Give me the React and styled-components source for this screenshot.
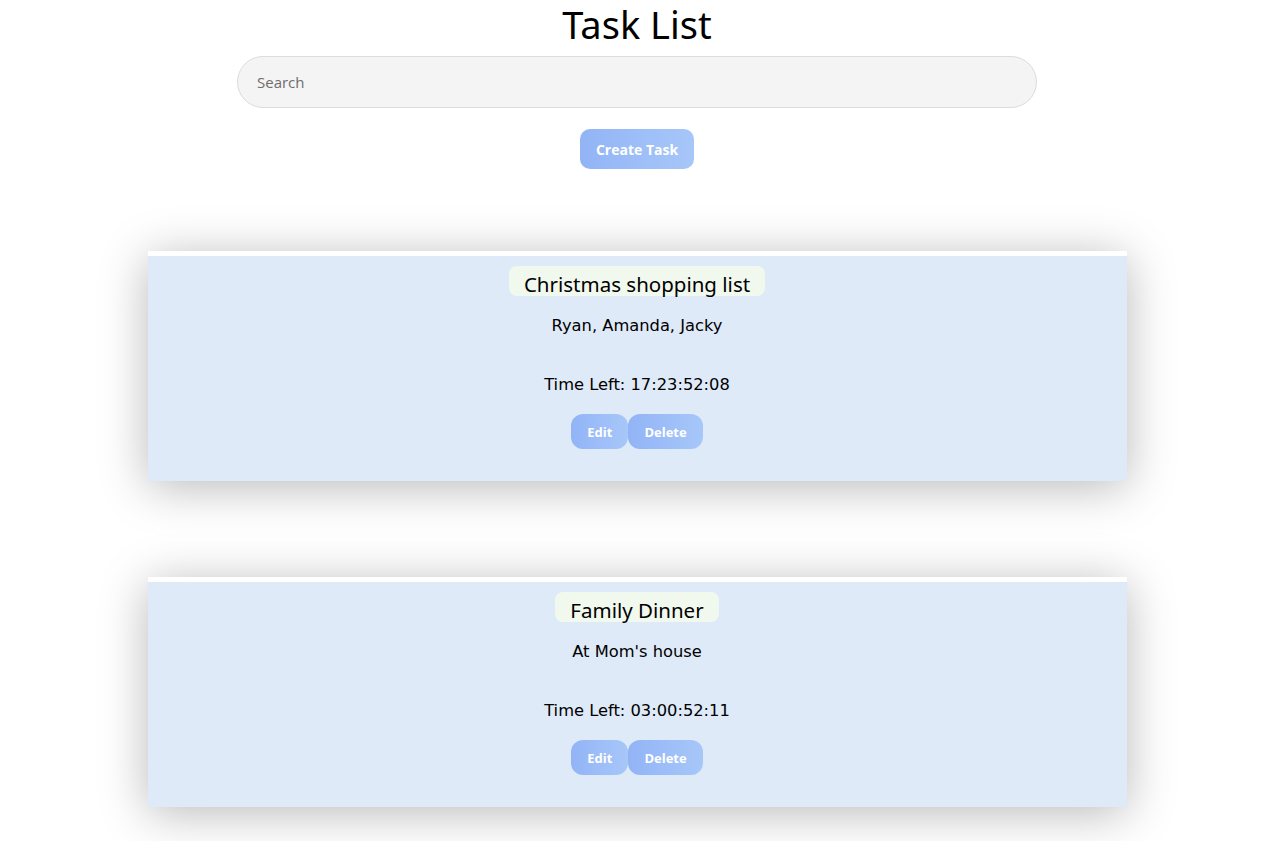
import React from "react";
import styled, { createGlobalStyle } from "styled-components";

const Global = createGlobalStyle`
  html, body { margin: 0; padding: 0; background: #ffffff; }
  body { font-family: "Noto Sans", "DejaVu Sans", sans-serif; color: #000; }
`;

const Page = styled.div`
  display: flex;
  flex-direction: column;
  align-items: center;
  padding-bottom: 60px;
`;

const Title = styled.h1`
  margin: 0;
  font-weight: 400;
  font-size: 38px;
  line-height: 48px;
  font-family: "Noto Sans", sans-serif;
`;

const Search = styled.input`
  box-sizing: border-box;
  margin-top: 8px;
  width: 800px;
  height: 52px;
  border-radius: 26px;
  border: 1px solid #dcdcdc;
  background: #f4f4f4;
  padding: 0 19px;
  font-family: "Open Sans", sans-serif;
  font-size: 15px;
  outline: none;
  &::placeholder { color: #6d6d6d; }
`;

const GradientButton = styled.button`
  border: none;
  color: #fff;
  font-family: "Open Sans", sans-serif;
  font-weight: 700;
  background: linear-gradient(to right, #92b4f6, #a7c7f9);
  cursor: pointer;
`;

const CreateButton = styled(GradientButton)`
  margin-top: 21px;
  height: 40px;
  padding: 0 16px;
  border-radius: 10px;
  font-size: 14px;
`;

const List = styled.div`
  margin-top: 82px;
  display: flex;
  flex-direction: column;
  gap: 96px;
`;

const Card = styled.div`
  box-sizing: border-box;
  width: 979px;
  height: 230px;
  border-top: 5px solid #ffffff;
  background: #dfeaf8;
  box-shadow: 0 6px 45px rgba(0, 0, 0, 0.28);
  display: flex;
  flex-direction: column;
  align-items: center;
  padding-top: 10px;
`;

const CardTitle = styled.div`
  box-sizing: border-box;
  height: 30px;
  padding: 6px 15px 0;
  line-height: 24px;
  border-radius: 8px;
  background: #f1f8ee;
  font-size: 20.5px;
`;

const Sub = styled.div`
  margin-top: 19px;
  font-family: "DejaVu Sans", sans-serif;
  font-size: 16.3px;
  line-height: 22px;
`;

const Time = styled.div`
  margin-top: 37px;
  font-family: "DejaVu Sans", sans-serif;
  font-size: 16.3px;
  line-height: 22px;
`;

const Actions = styled.div`
  margin-top: 18px;
  display: flex;
`;

const SmallButton = styled(GradientButton)`
  height: 35px;
  padding: 0 16px;
  border-radius: 12px;
  font-size: 13px;
`;

const tasks = [
  { title: "Christmas shopping list", sub: "Ryan, Amanda, Jacky", time: "17:23:52:08" },
  { title: "Family Dinner", sub: "At Mom's house", time: "03:00:52:11" },
];

export default function App() {
  return (
    <>
      <Global />
      <Page>
        <Title>Task List</Title>
        <Search placeholder="Search" />
        <CreateButton>Create Task</CreateButton>
        <List>
          {tasks.map((t) => (
            <Card key={t.title}>
              <CardTitle>{t.title}</CardTitle>
              <Sub>{t.sub}</Sub>
              <Time>Time Left: {t.time}</Time>
              <Actions>
                <SmallButton>Edit</SmallButton>
                <SmallButton>Delete</SmallButton>
              </Actions>
            </Card>
          ))}
        </List>
      </Page>
    </>
  );
}
